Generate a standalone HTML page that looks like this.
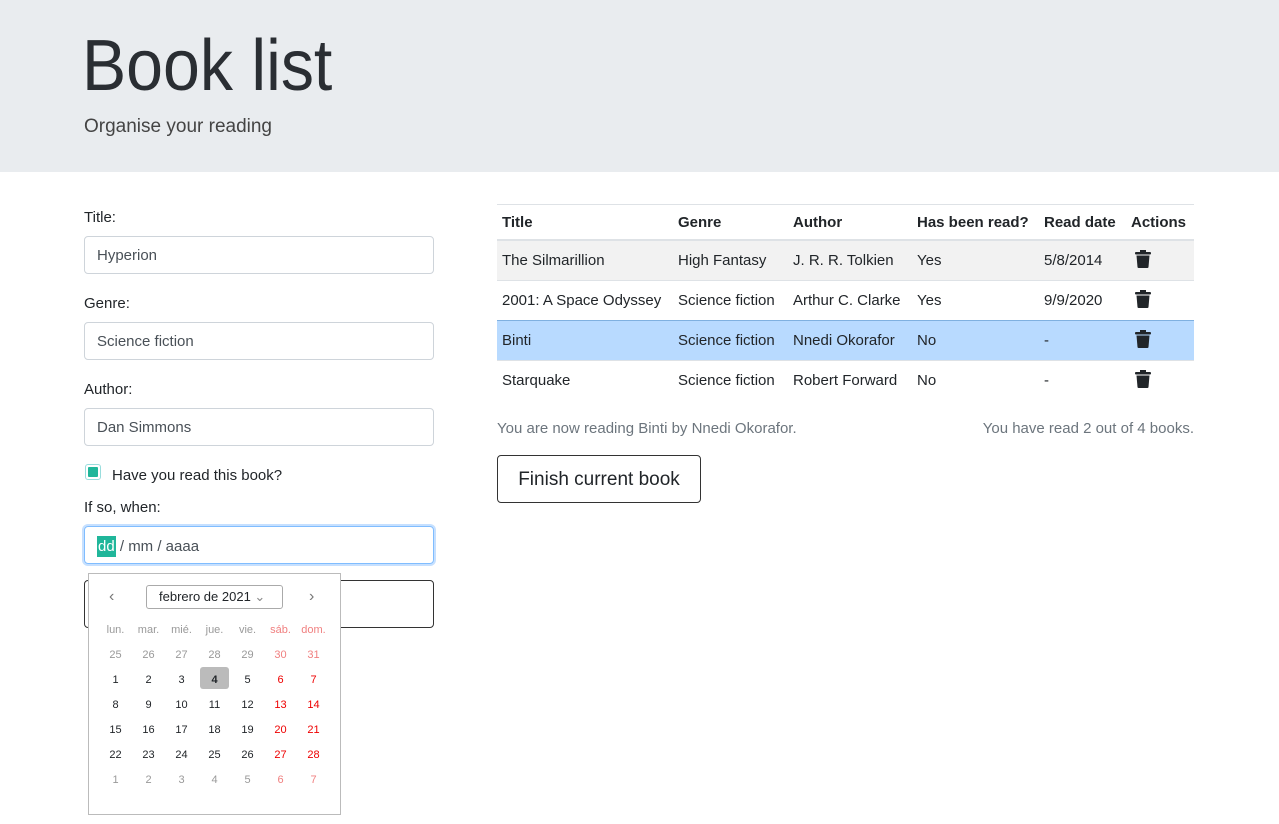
<!DOCTYPE html>
<html><head><style>
body{margin:0;width:1279px;height:801px;overflow:hidden;background:#fff;font-family:"Liberation Sans",sans-serif;color:#212529;position:relative}
.a{position:absolute}
.hdr{left:0;top:0;width:1279px;height:172px;background:#e9ecef}
.lbl{font-size:15px;left:84px}
.inp{left:84px;width:348px;height:36px;border:1px solid #ced4da;border-radius:4px;font-size:15px;line-height:38px;text-indent:12px;color:#495057}
table{border-collapse:collapse;font-size:15px}
td,th{padding:0 5px;text-align:left;white-space:nowrap}
th{height:34px;border-top:1px solid #dee2e6;border-bottom:2px solid #dee2e6}
td{height:39px;border-top:1px solid #dee2e6}
.cal{left:88px;top:573px;width:251px;height:240px;border:1px solid #bbb;background:#fff;font-size:11px}
.cal span{position:absolute;width:33px;text-align:center}
.g{color:#999}.r{color:#e00}.rg{color:#f08080}
</style></head><body>
<div class="a hdr"></div>
<div class="a" style="left:82px;top:24px;font-size:72px;line-height:84px;transform:scaleX(0.92);transform-origin:0 0;color:#2a2e33">Book list</div>
<div class="a" style="left:84px;top:116px;font-size:19px;color:#444">Organise your reading</div>

<div class="a lbl" style="top:209px">Title:</div>
<div class="a inp" style="top:236px">Hyperion</div>
<div class="a lbl" style="top:295px">Genre:</div>
<div class="a inp" style="top:322px">Science fiction</div>
<div class="a lbl" style="top:381px">Author:</div>
<div class="a inp" style="top:408px">Dan Simmons</div>
<div class="a" style="left:85px;top:464px;width:14px;height:14px;border:1px solid #9dd;border-radius:3px;background:#fff"><div style="margin:2px;width:10px;height:10px;background:#20b69a;border-radius:1px"></div></div>
<div class="a" style="left:112px;top:467px;font-size:15px">Have you read this book?</div>
<div class="a lbl" style="top:499px">If so, when:</div>
<div class="a" style="left:84px;top:526px;width:348px;height:36px;border:1px solid #80bdff;border-radius:4px;box-shadow:0 0 0 2px #c6e0ff;font-size:15px;line-height:40px;color:#495057"><span style="margin-left:12px;background:#20b69a;color:#fff;padding:2px 1px">dd</span> / mm / aaaa</div>
<div class="a" style="left:84px;top:580px;width:348px;height:46px;border:1px solid #333;border-radius:4px"></div>

<div class="a cal">
<div class="a" style="left:20px;top:14px;font-size:16px;color:#777">‹</div>
<div class="a" style="left:57px;top:11px;width:135px;height:22px;border:1px solid #aaa;border-radius:3px;font-size:13px;line-height:22px;text-indent:12px">febrero de 2021 <span style="position:static;color:#888">⌄</span></div>
<div class="a" style="left:220px;top:14px;font-size:16px;color:#777">›</div>
<div class="a" style="left:10px;top:50px;width:231px;height:200px">
<span class="g" style="left:0;top:0">lun.</span><span class="g" style="left:33px;top:0">mar.</span><span class="g" style="left:66px;top:0">mié.</span><span class="g" style="left:99px;top:0">jue.</span><span class="g" style="left:132px;top:0">vie.</span><span class="rg" style="left:165px;top:0">sáb.</span><span class="rg" style="left:198px;top:0">dom.</span>
<span class="g" style="left:0;top:25px">25</span><span class="g" style="left:33px;top:25px">26</span><span class="g" style="left:66px;top:25px">27</span><span class="g" style="left:99px;top:25px">28</span><span class="g" style="left:132px;top:25px">29</span><span class="rg" style="left:165px;top:25px">30</span><span class="rg" style="left:198px;top:25px">31</span>
<div class="a" style="left:101px;top:43px;width:29px;height:22px;background:#bbb;border-radius:3px"></div>
<span style="left:0;top:50px">1</span><span style="left:33px;top:50px">2</span><span style="left:66px;top:50px">3</span><span style="left:99px;top:50px;font-weight:bold">4</span><span style="left:132px;top:50px">5</span><span class="r" style="left:165px;top:50px">6</span><span class="r" style="left:198px;top:50px">7</span>
<span style="left:0;top:75px">8</span><span style="left:33px;top:75px">9</span><span style="left:66px;top:75px">10</span><span style="left:99px;top:75px">11</span><span style="left:132px;top:75px">12</span><span class="r" style="left:165px;top:75px">13</span><span class="r" style="left:198px;top:75px">14</span>
<span style="left:0;top:100px">15</span><span style="left:33px;top:100px">16</span><span style="left:66px;top:100px">17</span><span style="left:99px;top:100px">18</span><span style="left:132px;top:100px">19</span><span class="r" style="left:165px;top:100px">20</span><span class="r" style="left:198px;top:100px">21</span>
<span style="left:0;top:125px">22</span><span style="left:33px;top:125px">23</span><span style="left:66px;top:125px">24</span><span style="left:99px;top:125px">25</span><span style="left:132px;top:125px">26</span><span class="r" style="left:165px;top:125px">27</span><span class="r" style="left:198px;top:125px">28</span>
<span class="g" style="left:0;top:150px">1</span><span class="g" style="left:33px;top:150px">2</span><span class="g" style="left:66px;top:150px">3</span><span class="g" style="left:99px;top:150px">4</span><span class="g" style="left:132px;top:150px">5</span><span class="rg" style="left:165px;top:150px">6</span><span class="rg" style="left:198px;top:150px">7</span>
</div></div>

<svg width="0" height="0" style="position:absolute"><defs><symbol id="t" viewBox="0 0 16 18"><rect x="0" y="2" width="16" height="2.5" rx="1"/><rect x="5" y="0" width="6" height="3"/><path d="M1.5 5.5h13l-1 11.5q-.1 1-1 1h-9q-.9 0-1-1z"/></symbol></defs></svg>
<table class="a" style="left:497px;top:204px;width:697px">
<tr><th style="width:166px">Title</th><th style="width:105px">Genre</th><th style="width:114px">Author</th><th style="width:117px">Has been read?</th><th style="width:77px">Read date</th><th>Actions</th></tr>
<tr style="background:#f2f2f2"><td>The Silmarillion</td><td>High Fantasy</td><td>J. R. R. Tolkien</td><td>Yes</td><td>5/8/2014</td><td><svg width="16" height="18" style="margin-left:4px"><use href="#t" fill="#212529"/></svg></td></tr>
<tr><td>2001: A Space Odyssey</td><td>Science fiction</td><td>Arthur C. Clarke</td><td>Yes</td><td>9/9/2020</td><td><svg width="16" height="18" style="margin-left:4px"><use href="#t" fill="#212529"/></svg></td></tr>
<tr style="background:#b8daff"><td style="border-top-color:#7fb0e0">Binti</td><td style="border-top-color:#7fb0e0">Science fiction</td><td style="border-top-color:#7fb0e0">Nnedi Okorafor</td><td style="border-top-color:#7fb0e0">No</td><td style="border-top-color:#7fb0e0">-</td><td style="border-top-color:#7fb0e0"><svg width="16" height="18" style="margin-left:4px"><use href="#t" fill="#212529"/></svg></td></tr>
<tr><td>Starquake</td><td>Science fiction</td><td>Robert Forward</td><td>No</td><td>-</td><td><svg width="16" height="18" style="margin-left:4px"><use href="#t" fill="#212529"/></svg></td></tr>
</table>
<div class="a" style="left:497px;top:420px;font-size:15px;color:#6c757d">You are now reading Binti by Nnedi Okorafor.</div>
<div class="a" style="left:900px;width:294px;text-align:right;top:420px;font-size:15px;color:#6c757d">You have read 2 out of 4 books.</div>
<div class="a" style="left:497px;top:455px;width:202px;height:46px;border:1px solid #333;border-radius:4px;font-size:19px;line-height:48px;text-align:center">Finish current book</div>
</body></html>
